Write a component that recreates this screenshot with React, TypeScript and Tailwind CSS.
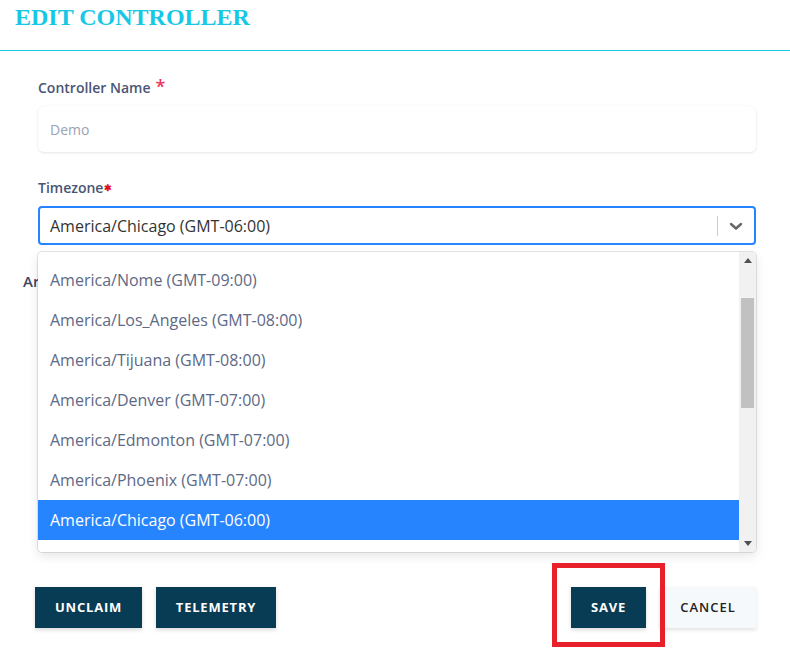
import React from "react";

const options = [
  "America/Nome (GMT-09:00)",
  "America/Los_Angeles (GMT-08:00)",
  "America/Tijuana (GMT-08:00)",
  "America/Denver (GMT-07:00)",
  "America/Edmonton (GMT-07:00)",
  "America/Phoenix (GMT-07:00)",
  "America/Chicago (GMT-06:00)",
];

export default function App() {
  return (
    <div className="w-[790px] h-[649px] bg-white overflow-hidden relative" style={{ fontFamily: '"Open Sans", "Noto Sans", sans-serif' }}>
      <div className="h-[51px] border-b border-[#1ccbe6] pl-[15px] pt-[3px]">
        <h1 className="text-[24px] leading-[28px] font-bold text-[#17c8e6]" style={{ fontFamily: '"Liberation Serif", "Times New Roman", serif' }}>
          EDIT CONTROLLER
        </h1>
      </div>

      <div className="pl-[38px] pr-[34px] pt-[27px]">
        <div className="flex items-start text-[14px] leading-[20px] font-semibold text-[#4a5576]">
          Controller Name
          <span className="ml-[5px] text-[#f0325b] text-[18px] leading-[16px]">*</span>
        </div>
        <div className="mt-[8px] h-[46px] rounded-[6px] bg-white shadow-[0_1px_3px_rgba(0,0,0,0.1),0_0_1px_rgba(0,0,0,0.06)] flex items-center px-[12px] text-[14px] text-[#9aa2b4]">
          Demo
        </div>

        <div className="mt-[26px] flex items-start text-[14px] leading-[20px] font-semibold text-[#4a5576]">
          Timezone
          <span className="ml-[1px] mt-[5px] text-[#e01020] text-[9px] leading-[10px]">✱</span>
        </div>

        <div className="relative mt-[8px]">
          <div className="h-[39px] rounded-[4px] border-2 border-[#2684ff] bg-white flex items-center">
            <div className="flex-1 pl-[10px] text-[16px] text-[#333333]">America/Chicago (GMT-06:00)</div>
            <div className="w-px h-[20px] bg-[#cccccc]" />
            <div className="w-[36px] flex items-center justify-center">
              <svg width="14" height="10" viewBox="0 0 14 10">
                <path d="M2 3 L7 7.5 L12 3" fill="none" stroke="#666666" strokeWidth="2.4" strokeLinecap="round" strokeLinejoin="round" />
              </svg>
            </div>
          </div>

          <div className="-ml-[15px] mt-[26px] text-[15px] font-semibold text-[#3c4866] h-[20px] leading-[20px] whitespace-nowrap">Area</div>
          <div className="h-[296px]" />

          <div className="absolute left-0 right-0 top-[46px] h-[300px] bg-white rounded-[4px] shadow-[0_0_0_1px_rgba(0,0,0,0.1),0_4px_11px_rgba(0,0,0,0.1)] overflow-hidden flex">
            <div className="flex-1 pt-[8px]">
              {options.map((o, i) => (
                <div
                  key={o}
                  className={`h-[40px] flex items-center pl-[12px] text-[16px] ${i === options.length - 1 ? "bg-[#2684ff] text-white" : "text-[#5d6986]"}`}
                >
                  {o}
                </div>
              ))}
            </div>
            <div className="w-[17px] bg-[#f1f1f1] flex flex-col items-center">
              <div className="h-[17px] flex items-center justify-center">
                <svg width="8" height="5" viewBox="0 0 8 5"><path d="M0 5 L4 0 L8 5 Z" fill="#505050" /></svg>
              </div>
              <div className="mt-[29px] w-[13px] h-[110px] bg-[#c1c1c1]" />
              <div className="flex-1" />
              <div className="h-[17px] flex items-center justify-center">
                <svg width="8" height="5" viewBox="0 0 8 5"><path d="M0 0 L8 0 L4 5 Z" fill="#505050" /></svg>
              </div>
            </div>
          </div>
        </div>
      </div>

      <div className="flex items-center pl-[35px] pr-[34px]">
        <button className="h-[41px] w-[107px] bg-[#083b54] text-white text-[13px] font-bold tracking-[0.8px] shadow-[0_2px_4px_rgba(0,0,0,0.15)]">
          UNCLAIM
        </button>
        <button className="ml-[14px] h-[41px] w-[120px] bg-[#083b54] text-white text-[13px] font-bold tracking-[0.8px] shadow-[0_2px_4px_rgba(0,0,0,0.15)]">
          TELEMETRY
        </button>
        <div className="flex-1" />
        <button className="h-[41px] w-[75px] bg-[#083b54] text-white text-[13px] font-bold tracking-[0.8px] shadow-[0_2px_4px_rgba(0,0,0,0.15)]">
          SAVE
        </button>
        <button className="ml-[14px] h-[41px] w-[96px] bg-[#f6f9fc] text-[#222222] text-[13px] font-semibold tracking-[1px] shadow-[0_2px_4px_rgba(0,0,0,0.12)]">
          CANCEL
        </button>
      </div>

      <div className="absolute left-[552px] top-[563px] w-[113px] h-[84px] border-[5px] border-[#e8202a]" />
    </div>
  );
}
